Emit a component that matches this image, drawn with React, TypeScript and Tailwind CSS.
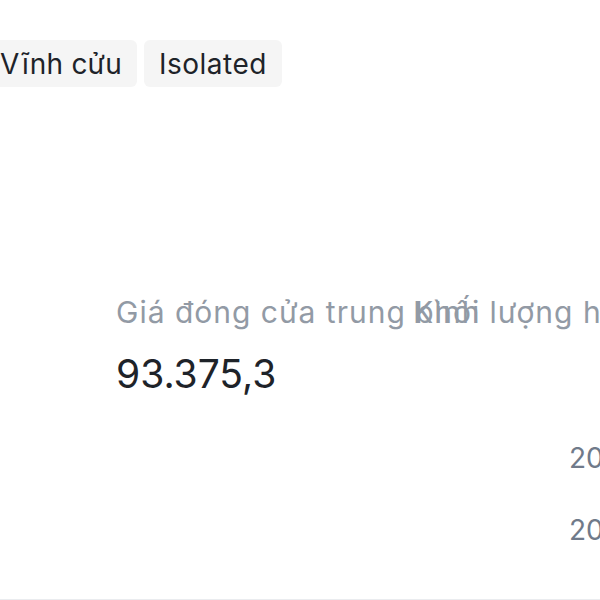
export default function App() {
    const dates = ["2025-01-06 08:00", "2025-01-05 08:00"];

    return (
        <main
            className="relative w-[600px] h-[600px] overflow-hidden bg-white border-b border-[#eaecef]"
            style={{ fontFamily: "Inter, 'Noto Sans', sans-serif" }}
        >
            {/* chips */}
            <div className="flex gap-[7px] -ml-[15px] pt-[40px]">
                <span className="h-[47px] px-[15px] flex items-center rounded-[6px] bg-[#f5f5f5] text-[28px] tracking-[0.2px] text-[#1e2329] whitespace-nowrap">
                    Vĩnh cửu
                </span>
                <span className="h-[47px] px-[15px] flex items-center rounded-[6px] bg-[#f5f5f5] text-[28px] tracking-[0.5px] text-[#1e2329] whitespace-nowrap">
                    Isolated
                </span>
            </div>

            {/* stats */}
            <div className="flex pl-[116px] mt-[205px]">
                <div className="w-[297px] shrink-0">
                    <div className="text-[30px] leading-[40px] tracking-[1px] text-[#929aa5] whitespace-nowrap">
                        Giá đóng cửa trung bình
                    </div>
                    <div className="mt-[18px] text-[39px] leading-[48px] text-[#1e2329] whitespace-nowrap">
                        93.375,3
                    </div>
                </div>
                <div className="text-[30px] leading-[40px] tracking-[1px] text-[#929aa5] whitespace-nowrap">
                    Khối lượng hợp đồng
                </div>
            </div>

            {/* dates */}
            <div className="flex flex-col gap-[36px] pl-[569px] mt-[42px]">
                {dates.map((d) => (
                    <div key={d} className="text-[28px] leading-[36px] text-[#707a8a] whitespace-nowrap">
                        {d}
                    </div>
                ))}
            </div>
        </main>
    )
}
